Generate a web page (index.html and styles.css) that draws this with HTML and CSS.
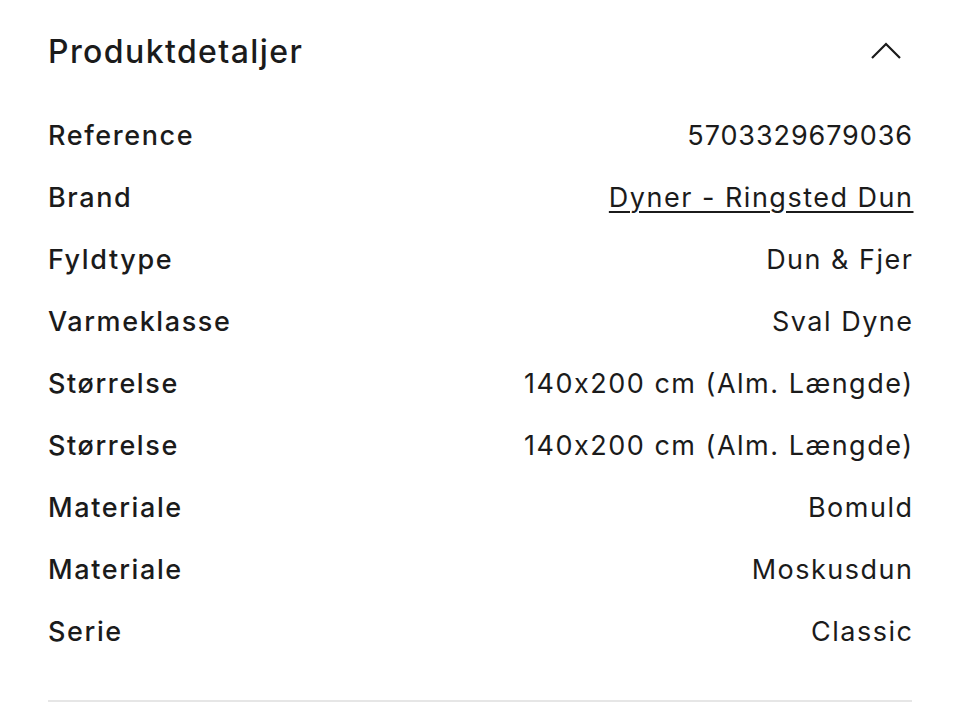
FILE: index.html
```html
<!DOCTYPE html>
<html lang="da">
<head>
    <meta charset="UTF-8">
    <meta name="viewport" content="width=device-width, initial-scale=1.0">
    <title>Produktdetaljer</title>
    <link rel="stylesheet" href="styles.css">
</head>
<body>
    <section class="details">
        <div class="details-head">
            <h2>Produktdetaljer</h2>
            <svg class="chevron" width="32" height="18" viewBox="0 0 32 18" aria-hidden="true">
                <polyline points="2,16 16,2 30,16" fill="none" stroke="#1b1b1b" stroke-width="2.2"/>
            </svg>
        </div>
        <dl class="details-list">
            <div class="row">
                <dt>Reference</dt>
                <dd class="num">5703329679036</dd>
            </div>
            <div class="row">
                <dt>Brand</dt>
                <dd><a href="#">Dyner - Ringsted Dun</a></dd>
            </div>
            <div class="row">
                <dt>Fyldtype</dt>
                <dd>Dun &amp; Fjer</dd>
            </div>
            <div class="row">
                <dt>Varmeklasse</dt>
                <dd>Sval Dyne</dd>
            </div>
            <div class="row">
                <dt>Størrelse</dt>
                <dd>140x200 cm (Alm. Længde)</dd>
            </div>
            <div class="row">
                <dt>Størrelse</dt>
                <dd>140x200 cm (Alm. Længde)</dd>
            </div>
            <div class="row">
                <dt>Materiale</dt>
                <dd>Bomuld</dd>
            </div>
            <div class="row">
                <dt>Materiale</dt>
                <dd>Moskusdun</dd>
            </div>
            <div class="row">
                <dt>Serie</dt>
                <dd>Classic</dd>
            </div>
        </dl>
        <hr class="divider">
    </section>
</body>
</html>
```
FILE: styles.css
```css
body {
    margin: 0;
    background: #fff;
    color: #1b1b1b;
    font-family: Inter, "Open Sans", Arial, sans-serif;
}
.details {
    padding: 20px 48px 0;
}
.details-head {
    display: flex;
    justify-content: space-between;
    align-items: center;
    height: 62px;
}
.details-head h2 {
    margin: 0;
    font-size: 32px;
    font-weight: 500;
    letter-spacing: 1.4px;
}
.chevron {
    margin-right: 10px;
}
.details-list {
    margin: 22px 0 0;
}
.row {
    display: flex;
    justify-content: space-between;
    align-items: center;
    height: 62px;
    font-size: 27px;
}
.row dt {
    font-weight: 500;
    letter-spacing: 1.6px;
}
.row dd {
    margin: 0 -1.5px 0 0;
    font-weight: 400;
    letter-spacing: 1.5px;
}
.row dd.num {
    margin-right: -0.9px;
    letter-spacing: 0.9px;
}
.row a {
    color: inherit;
    text-decoration: underline;
    text-underline-offset: 4px;
    text-decoration-thickness: 2px;
}
.divider {
    margin: 38px 0 0;
    border: 0;
    height: 2px;
    background: #e6e6e6;
}
```
